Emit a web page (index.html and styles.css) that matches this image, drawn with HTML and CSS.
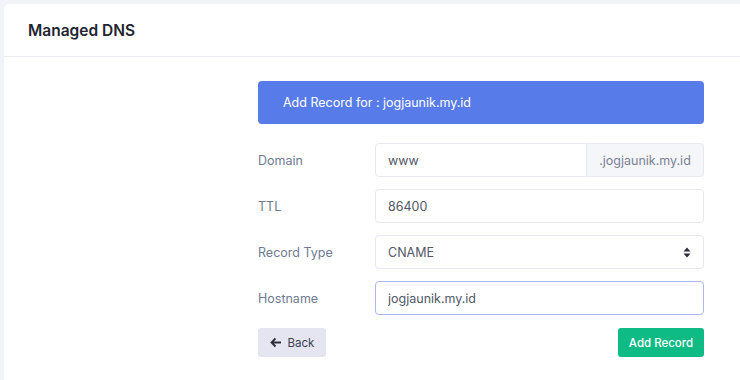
FILE: index.html
```html
<!DOCTYPE html>
<html lang="en">
<head>
    <meta charset="UTF-8">
    <meta name="viewport" content="width=device-width, initial-scale=1.0">
    <title>Managed DNS</title>
    <link rel="stylesheet" href="styles.css">
</head>
<body>
    <div class="card">
        <!-- Header -->
        <div class="card-header">
            <h1>Managed DNS</h1>
        </div>

        <!-- Form -->
        <div class="card-body">
            <div class="record-form">
                <div class="alert">Add Record for : jogjaunik.my.id</div>

                <div class="form-row">
                    <label>Domain</label>
                    <div class="input-group">
                        <input type="text" class="input" value="www">
                        <span class="addon">.jogjaunik.my.id</span>
                    </div>
                </div>

                <div class="form-row">
                    <label>TTL</label>
                    <input type="text" class="input" value="86400">
                </div>

                <div class="form-row">
                    <label>Record Type</label>
                    <div class="select">
                        <span>CNAME</span>
                        <svg width="8" height="11" viewBox="0 0 8 11"><path d="M4 0.5 L7.5 4.5 H0.5 Z M4 10.5 L7.5 6.5 H0.5 Z" fill="#2b2f3a"/></svg>
                    </div>
                </div>

                <div class="form-row">
                    <label>Hostname</label>
                    <input type="text" class="input focus" value="jogjaunik.my.id">
                </div>

                <div class="form-actions">
                    <button class="btn-back">
                        <svg width="12" height="11" viewBox="0 0 12 11"><path d="M11 5.5 H2 M5.5 1.5 L1.5 5.5 L5.5 9.5" fill="none" stroke="#2b2f3a" stroke-width="1.8"/></svg>
                        Back
                    </button>
                    <button class="btn-add">Add Record</button>
                </div>
            </div>
        </div>
    </div>
</body>
</html>
```

FILE: styles.css
```css
body, html {
    margin: 0;
    padding: 0;
    background: #f2f3f8;
    font-family: Inter, "Open Sans", sans-serif;
    overflow: hidden;
}

body {
    padding: 4px 0 0 4px;
    height: 380px;
    box-sizing: border-box;
}

/* Card */
.card {
    background: #fff;
    border-radius: 5px 0 0 0;
    width: 736px;
    height: 376px;
}

.card-header {
    height: 53px;
    border-bottom: 1px solid #ebedf2;
    display: flex;
    align-items: center;
    padding-left: 24px;
    box-sizing: border-box;
}

.card-header h1 {
    margin: 0;
    font-size: 15.5px;
    font-weight: 600;
    color: #1f2430;
}

.card-body {
    padding: 24px 0 0 254px;
}

.record-form {
    width: 446px;
}

/* Alert */
.alert {
    background: #587bea;
    color: #fff;
    font-size: 12.5px;
    height: 43px;
    display: flex;
    align-items: center;
    padding-left: 25px;
    border-radius: 4px;
    margin-bottom: 19px;
}

/* Rows */
.form-row {
    display: flex;
    align-items: center;
    margin-bottom: 12px;
}

.form-row label {
    width: 117px;
    flex-shrink: 0;
    font-size: 12.5px;
    color: #707a92;
}

.input, .input-group, .select {
    width: 329px;
    height: 34px;
    box-sizing: border-box;
}

.input {
    border: 1px solid #e7e9ef;
    border-radius: 4px;
    padding: 0 12px;
    font-family: inherit;
    font-size: 12.5px;
    color: #525866;
    outline: none;
}

.input.focus {
    border-color: #aab8f0;
}

.input-group {
    display: flex;
}

.input-group .input {
    width: auto;
    flex: 1;
    min-width: 0;
    border-radius: 4px 0 0 4px;
}

.addon {
    width: 116px;
    background: #f5f6fa;
    border: 1px solid #e7e9ef;
    border-left: none;
    border-radius: 0 4px 4px 0;
    display: flex;
    align-items: center;
    justify-content: center;
    font-size: 12.5px;
    color: #7b8196;
}

.select {
    border: 1px solid #e7e9ef;
    border-radius: 4px;
    padding: 0 12px;
    display: flex;
    align-items: center;
    justify-content: space-between;
    font-size: 12.5px;
    color: #525866;
}

/* Buttons */
.form-actions {
    display: flex;
    justify-content: space-between;
    margin-top: 0;
    padding-top: 1px;
}

.form-actions button {
    height: 29px;
    border: none;
    border-radius: 3px;
    font-family: inherit;
    font-size: 11.5px;
    cursor: pointer;
}

.btn-back {
    width: 68px;
    background: #e5e4f1;
    color: #3c4150;
    display: flex;
    align-items: center;
    justify-content: center;
    gap: 6px;
}

.btn-add {
    width: 86px;
    background: #0fbb85;
    color: #fff;
    font-weight: 500;
}
```
